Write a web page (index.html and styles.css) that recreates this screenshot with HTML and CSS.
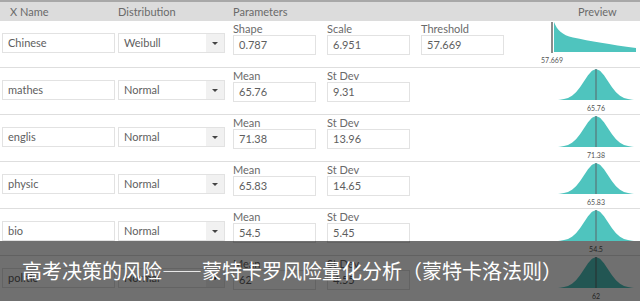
FILE: index.html
```html
<!DOCTYPE html>
<html lang="zh-CN">
<head>
    <meta charset="UTF-8">
    <title>蒙特卡罗风险量化分析</title>
    <link rel="stylesheet" href="styles.css">
</head>
<body>
    <div class="sheet">
        <div class="head">
            <span class="h-name">X Name</span>
            <span class="h-dist">Distribution</span>
            <span class="h-params">Parameters</span>
            <span class="h-preview">Preview</span>
        </div>

        <!-- Weibull row -->
        <div class="row">
            <div class="cell-name"><div class="field">Chinese</div></div>
            <div class="cell-dist"><div class="field select">Weibull<span class="arrow"></span></div></div>
            <div class="cell-params">
                <div class="param"><label>Shape</label><div class="field">0.787</div></div>
                <div class="param"><label>Scale</label><div class="field">6.951</div></div>
                <div class="param"><label>Threshold</label><div class="field">57.669</div></div>
            </div>
            <div class="cell-preview">
                <svg width="100" height="46" viewBox="0 0 100 46">
                    <rect x="11" y="1" width="2" height="31" fill="#8c8c8c"/>
                    <path d="M14 31 L14 1 C17 9 22 14 33 16.5 C50 20 70 23.5 96 27 L96 31 Z" fill="#4fc4be"/>
                    <text x="12" y="42" class="tick">57.669</text>
                </svg>
            </div>
        </div>

        <div class="row">
            <div class="cell-name"><div class="field">mathes</div></div>
            <div class="cell-dist"><div class="field select">Normal<span class="arrow"></span></div></div>
            <div class="cell-params">
                <div class="param"><label>Mean</label><div class="field">65.76</div></div>
                <div class="param"><label>St Dev</label><div class="field">9.31</div></div>
            </div>
            <div class="cell-preview">
                <svg width="100" height="46" viewBox="0 0 100 46">
                    <use href="#bell"/>
                    <text x="56" y="43" class="tick">65.76</text>
                </svg>
            </div>
        </div>

        <div class="row">
            <div class="cell-name"><div class="field">englis</div></div>
            <div class="cell-dist"><div class="field select">Normal<span class="arrow"></span></div></div>
            <div class="cell-params">
                <div class="param"><label>Mean</label><div class="field">71.38</div></div>
                <div class="param"><label>St Dev</label><div class="field">13.96</div></div>
            </div>
            <div class="cell-preview">
                <svg width="100" height="46" viewBox="0 0 100 46">
                    <use href="#bell"/>
                    <text x="56" y="43" class="tick">71.38</text>
                </svg>
            </div>
        </div>

        <div class="row">
            <div class="cell-name"><div class="field">physic</div></div>
            <div class="cell-dist"><div class="field select">Normal<span class="arrow"></span></div></div>
            <div class="cell-params">
                <div class="param"><label>Mean</label><div class="field">65.83</div></div>
                <div class="param"><label>St Dev</label><div class="field">14.65</div></div>
            </div>
            <div class="cell-preview">
                <svg width="100" height="46" viewBox="0 0 100 46">
                    <use href="#bell"/>
                    <text x="56" y="43" class="tick">65.83</text>
                </svg>
            </div>
        </div>

        <div class="row">
            <div class="cell-name"><div class="field">bio</div></div>
            <div class="cell-dist"><div class="field select">Normal<span class="arrow"></span></div></div>
            <div class="cell-params">
                <div class="param"><label>Mean</label><div class="field">54.5</div></div>
                <div class="param"><label>St Dev</label><div class="field">5.45</div></div>
            </div>
            <div class="cell-preview">
                <svg width="100" height="46" viewBox="0 0 100 46">
                    <use href="#bell"/>
                    <text x="56" y="43" class="tick">54.5</text>
                </svg>
            </div>
        </div>

        <div class="row">
            <div class="cell-name"><div class="field">politic</div></div>
            <div class="cell-dist"><div class="field select">Normal<span class="arrow"></span></div></div>
            <div class="cell-params">
                <div class="param"><label>Mean</label><div class="field">62</div></div>
                <div class="param"><label>St Dev</label><div class="field">4.55</div></div>
            </div>
            <div class="cell-preview">
                <svg width="100" height="46" viewBox="0 0 100 46">
                    <use href="#bell"/>
                    <text x="56" y="43" class="tick">62</text>
                </svg>
            </div>
        </div>
    </div>

    <!-- shared bell curve -->
    <svg class="defs" width="0" height="0">
        <defs>
            <g id="bell">
                <path d="M18 32 L20 31.7 24 31.1 28 30 32 27.8 36 24.3 40 19.3 44 13.2 48 7.2 52 2.7 56 1 60 2.7 64 7.2 68 13.2 72 19.3 76 24.3 80 27.8 84 30 88 31.1 92 31.7 94 32 Z" fill="#4fc4be"/>
                <rect x="55.5" y="1" width="1" height="31" fill="#5a6468"/>
            </g>
        </defs>
    </svg>

    <div class="caption">高考决策的风险——蒙特卡罗风险量化分析（蒙特卡洛法则）</div>
</body>
</html>
```

FILE: styles.css
```css
body {
    margin: 0;
    width: 640px;
    height: 301px;
    overflow: hidden;
    position: relative;
    background: #fff;
    font-family: 'Lato', 'Open Sans', sans-serif;
    font-size: 11px;
    color: #666;
}

.head {
    height: 19px;
    border-top: 2px solid #a8a8a8;
    background: #dcdcdc;
    display: flex;
    align-items: center;
    color: #6a6a6a;
}

.h-name { margin-left: 10px; width: 108px; }
.h-dist { width: 115px; }
.h-params { width: 345px; }

.row {
    height: 46px;
    border-bottom: 1px solid #dedede;
    display: flex;
}

.field {
    height: 18px;
    line-height: 18px;
    border: 1px solid #e2e2e2;
    background: #fff;
    padding: 0 5px;
    color: #5e5e5e;
}

.cell-name {
    margin-left: 2px;
    width: 113px;
    padding-top: 12px;
}

.cell-name .field { width: 101px; }

.cell-dist {
    margin-left: 3px;
    width: 107px;
    padding-top: 12px;
}

.select {
    width: 95px;
    position: relative;
}

.select .arrow {
    position: absolute;
    right: 0;
    top: 0;
    width: 18px;
    height: 18px;
    background: #f1f1f1;
}

.select .arrow::after {
    content: "";
    position: absolute;
    left: 6px;
    top: 8px;
    border-left: 3px solid transparent;
    border-right: 3px solid transparent;
    border-top: 3px solid #444;
}

.cell-params {
    margin-left: 8px;
    width: 307px;
    display: flex;
    gap: 11px;
}

.param label {
    display: block;
    height: 13px;
    line-height: 13px;
    margin-top: 1px;
    color: #6a6a6a;
}

.param .field { width: 71px; }

.cell-preview {
    width: 100px;
}

.cell-preview svg { display: block; }

.tick {
    font-size: 7px;
    fill: #555;
    text-anchor: middle;
    font-family: 'Lato', sans-serif;
}

.defs { position: absolute; }

.caption {
    position: absolute;
    left: 0;
    right: 0;
    bottom: 0;
    height: 60px;
    background: rgba(0, 0, 0, 0.56);
    color: #fff;
    font-family: 'Noto Sans CJK SC', sans-serif;
    font-size: 20px;
    line-height: 60px;
    padding-left: 22px;
    box-sizing: border-box;
}
```
